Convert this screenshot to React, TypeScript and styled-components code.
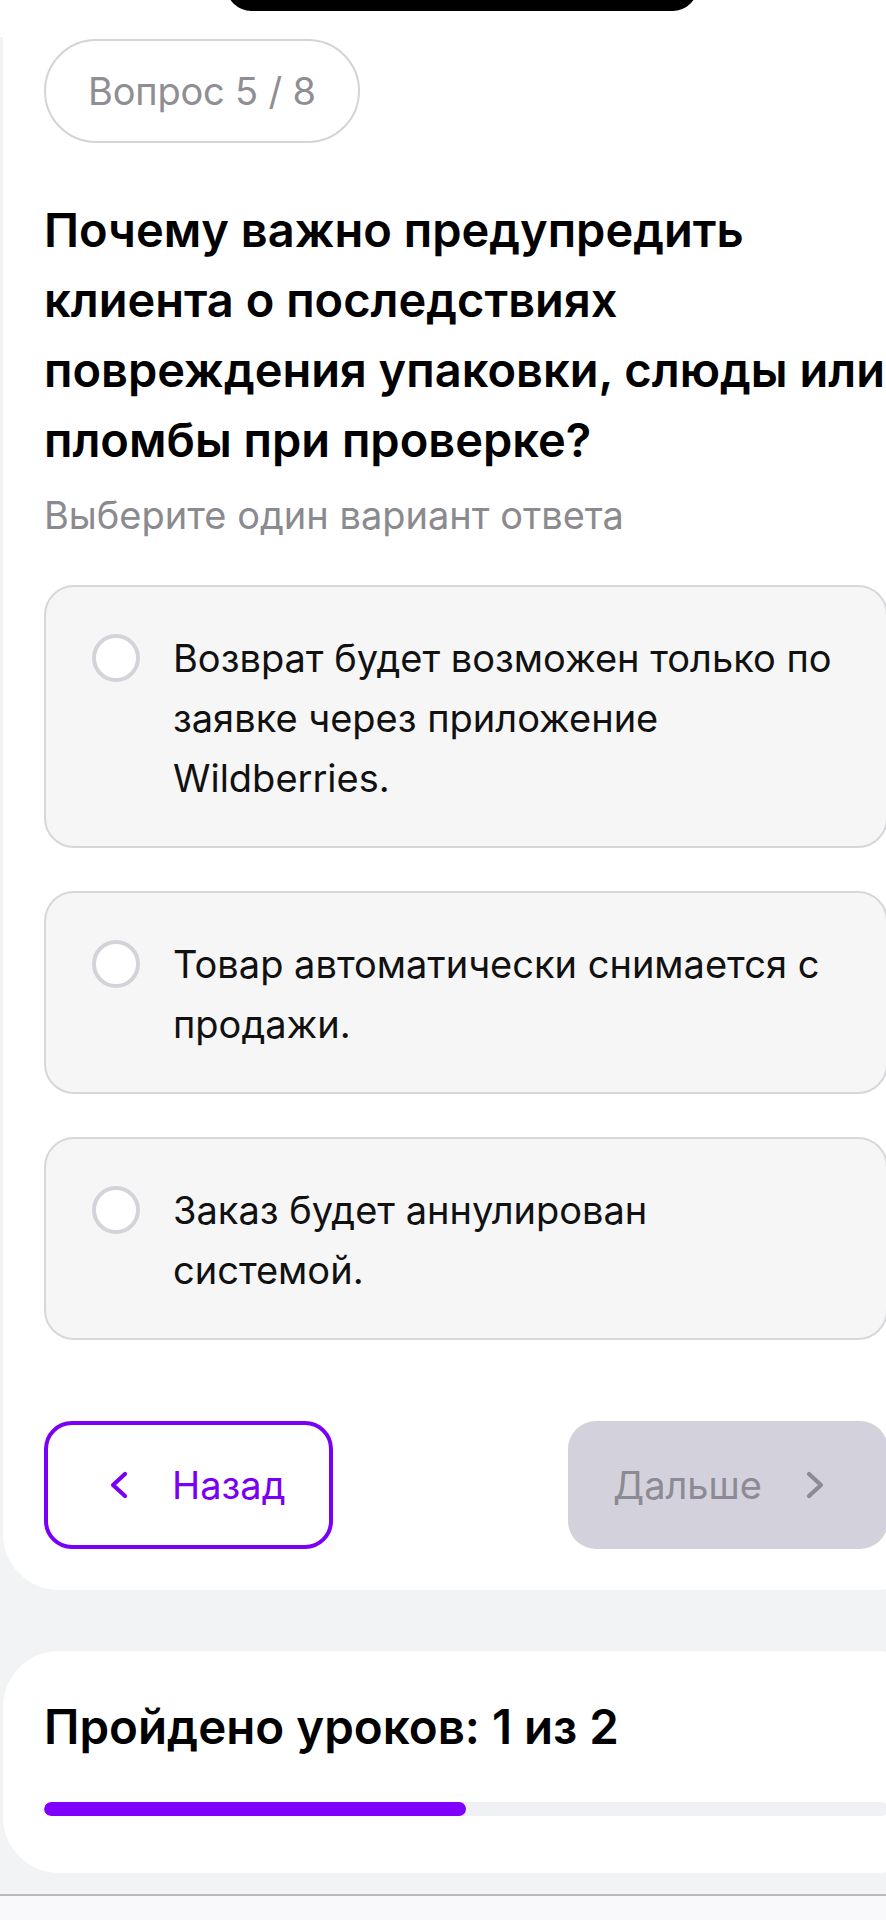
import React from "react";
import styled, { createGlobalStyle } from "styled-components";

const GlobalStyle = createGlobalStyle`
  html, body {
    margin: 0;
    padding: 0;
    background: #f2f3f5;
    overflow: hidden;
  }
  body {
    font-family: Inter, "Noto Sans", "Liberation Sans", sans-serif;
    color: #000;
  }
  * {
    box-sizing: border-box;
  }
`;

const options = [
  "Возврат будет возможен только по заявке через приложение Wildberries.",
  "Товар автоматически снимается с продажи.",
  "Заказ будет аннулирован системой.",
];

const Page = styled.div`
  width: 886px;
  min-height: 1920px;
  background: #f2f3f5;
  display: flex;
  flex-direction: column;
  overflow: hidden;
`;

const StatusBar = styled.div`
  position: relative;
  height: 37px;
  background: #fff;
`;

const Island = styled.div`
  position: absolute;
  left: 226px;
  top: -40px;
  width: 472px;
  height: 51px;
  border-radius: 26px;
  background: #000;
`;

const MainCard = styled.section`
  margin-left: 3px;
  width: 930px;
  background: #fff;
  border-bottom-left-radius: 56px;
  border-bottom-right-radius: 56px;
  padding: 2px 0 41px 41px;
  display: flex;
  flex-direction: column;
`;

const Column = styled.div`
  width: 844px;
  display: flex;
  flex-direction: column;
`;

const Counter = styled.div`
  align-self: flex-start;
  height: 104px;
  padding: 0 42px;
  border: 2px solid #d3d3d8;
  border-radius: 52px;
  display: flex;
  align-items: center;
  font-size: 38px;
  color: #8e8e93;
  letter-spacing: -0.2px;
`;

const Question = styled.h1`
  margin: 52px 0 0;
  width: 860px;
  font-size: 47px;
  line-height: 70px;
  font-weight: 600;
`;

const Hint = styled.p`
  margin: 16px 0 0;
  font-size: 38px;
  line-height: 48px;
  color: #8a8a8f;
`;

const OptionList = styled.div`
  margin-top: 46px;
  display: flex;
  flex-direction: column;
  gap: 43px;
`;

const Option = styled.label`
  display: flex;
  align-items: flex-start;
  gap: 33px;
  padding: 41px 47px 38px 46px;
  border: 2px solid #d7d7db;
  border-radius: 30px;
  background: #f6f6f7;
  cursor: pointer;
`;

const Radio = styled.span`
  flex: none;
  width: 48px;
  height: 48px;
  margin-top: 6px;
  border: 4px solid #d3d3d9;
  border-radius: 50%;
  background: #fff;
`;

const OptionText = styled.span`
  font-size: 38px;
  line-height: 60px;
  color: #111;
`;

const Actions = styled.div`
  margin-top: 81px;
  display: flex;
  justify-content: space-between;
  align-items: center;
`;

const NavButton = styled.button<{ $primary?: boolean }>`
  height: 128px;
  display: flex;
  align-items: center;
  gap: 44px;
  padding: ${({ $primary }) => ($primary ? "0 43px 0 62px" : "0 64px 0 45px")};
  border: ${({ $primary }) => ($primary ? "4px solid #7a00f5" : "none")};
  border-radius: 28px;
  background: ${({ $primary }) => ($primary ? "#fff" : "#d3d2dc")};
  color: ${({ $primary }) => ($primary ? "#7a00f5" : "#8c8b94")};
  font-family: inherit;
  font-size: 38px;
  cursor: pointer;
`;

const ProgressCard = styled.section`
  margin: 61px 0 0 3px;
  width: 930px;
  background: #fff;
  border-radius: 56px;
  padding: 48px 0 57px 41px;
`;

const ProgressTitle = styled.h2`
  margin: 0;
  font-size: 47.5px;
  line-height: 56px;
  font-weight: 600;
`;

const Track = styled.div`
  margin-top: 47px;
  width: 844px;
  height: 14px;
  border-radius: 7px;
  background: #f0f1f4;
  overflow: hidden;
`;

const Fill = styled.div`
  height: 100%;
  border-radius: 7px;
  background: #7f00ff;
`;

const TabBar = styled.div`
  margin-top: 21px;
  flex: 1;
  border-top: 2px solid #b9b9be;
  background: #f9f9fb;
`;

function Chevron({ dir }: { dir: "left" | "right" }) {
  const points = dir === "left" ? "15,4 3,15 15,26" : "3,4 15,15 3,26";
  return (
    <svg width="18" height="30" viewBox="0 0 18 30" fill="none">
      <polyline
        points={points}
        stroke="currentColor"
        strokeWidth="4.2"
        strokeLinecap="round"
        strokeLinejoin="round"
      />
    </svg>
  );
}

export default function App() {
  const passed = 1;
  const total = 2;
  return (
    <Page>
      <GlobalStyle />
      <StatusBar>
        <Island />
      </StatusBar>
      <MainCard>
        <Column>
          <Counter>Вопрос 5 / 8</Counter>
          <Question>
            Почему важно предупредить клиента о последствиях повреждения
            упаковки, слюды или пломбы при проверке?
          </Question>
          <Hint>Выберите один вариант ответа</Hint>
          <OptionList>
            {options.map((text) => (
              <Option key={text}>
                <Radio />
                <OptionText>{text}</OptionText>
              </Option>
            ))}
          </OptionList>
          <Actions>
            <NavButton $primary>
              <Chevron dir="left" />
              Назад
            </NavButton>
            <NavButton>
              Дальше
              <Chevron dir="right" />
            </NavButton>
          </Actions>
        </Column>
      </MainCard>
      <ProgressCard>
        <ProgressTitle>
          Пройдено уроков: {passed} из {total}
        </ProgressTitle>
        <Track>
          <Fill style={{ width: `${(passed / total) * 100}%` }} />
        </Track>
      </ProgressCard>
      <TabBar />
    </Page>
  );
}
